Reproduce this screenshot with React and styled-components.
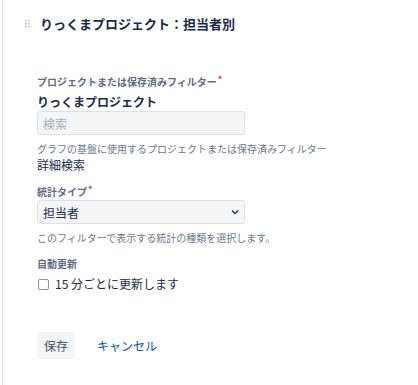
import React from 'react'
import styled, { createGlobalStyle } from 'styled-components'

const GlobalStyle = createGlobalStyle`
    html, body {
        margin: 0;
        padding: 0;
        background: #fff;
    }
    body {
        font-family: "Noto Sans CJK JP", "Noto Sans", sans-serif;
        color: #172b4d;
    }
`;

const Page = styled.div`
    padding-left: 2px;
    height: 385px;
    box-sizing: border-box;
`;

const Panel = styled.div`
    border-left: 1px solid #e2e2ea;
    height: 100%;
    box-sizing: border-box;
`;

const Header = styled.div`
    display: flex;
    align-items: center;
    padding: 14px 0 0 22px;
    gap: 10px;
`;

const Handle = styled.svg`
    display: block;
    flex-shrink: 0;
`;

const Title = styled.h2`
    margin: 0;
    font-size: 13px;
    line-height: 20px;
    font-weight: 700;
    color: #172b4d;
`;

const Form = styled.form`
    padding: 41px 0 0 34px;
    display: flex;
    flex-direction: column;
`;

const Field = styled.div`
    display: flex;
    flex-direction: column;
    margin-top: ${props => props.gap || 0}px;
`;

const Label = styled.label`
    font-size: 10px;
    line-height: 14px;
    font-weight: 700;
    color: #5e6c84;
    margin-bottom: ${props => props.mb || 1}px;
    span {
        color: #de350b;
        font-size: 9px;
        vertical-align: top;
        line-height: 10px;
        margin-left: 1px;
    }
`;

const Value = styled.div`
    font-size: 12px;
    line-height: 16px;
    font-weight: ${props => props.bold ? 700 : 400};
    color: #172b4d;
    margin-bottom: ${props => props.mb || 0}px;
    margin-top: ${props => props.mt || 0}px;
`;

const Search = styled.input`
    width: 208px;
    height: 24px;
    box-sizing: border-box;
    background: #f4f5f7;
    border: 1px solid #dfe1e6;
    border-radius: 3px;
    padding: 0 5px;
    font-family: inherit;
    font-size: 12px;
    color: #172b4d;
    outline: none;
    &::placeholder {
        color: #a5adba;
    }
`;

const Select = styled.select`
    appearance: none;
    width: 208px;
    height: 24px;
    box-sizing: border-box;
    background-color: #f4f5f7;
    background-image: url("data:image/svg+xml,%3Csvg xmlns='http://www.w3.org/2000/svg' width='8' height='6' viewBox='0 0 8 6'%3E%3Cpath d='M1 1.5l3 3 3-3' fill='none' stroke='%23253858' stroke-width='1.4'/%3E%3C/svg%3E");
    background-repeat: no-repeat;
    background-position: right 5px center;
    border: 1px solid #dfe1e6;
    border-radius: 3px;
    padding: 0 5px;
    font-family: inherit;
    font-size: 12px;
    color: #172b4d;
    outline: none;
`;

const Help = styled.div`
    font-size: 10px;
    line-height: 14px;
    color: #6b778c;
    margin-top: 7px;
`;

const CheckRow = styled.label`
    display: flex;
    align-items: center;
    gap: 6px;
    margin-top: 4px;
    font-size: 12px;
    line-height: 16px;
    color: #172b4d;
`;

const Check = styled.input`
    appearance: none;
    margin: 0 0 0 1px;
    width: 11px;
    height: 11px;
    border: 1px solid #8993a4;
    border-radius: 2px;
    background: #fff;
    box-sizing: border-box;
`;

const Actions = styled.div`
    display: flex;
    align-items: center;
    gap: 15px;
    margin-top: 40px;
`;

const Button = styled.button`
    height: 27px;
    padding: 0 7px;
    border: none;
    border-radius: 3px;
    background: ${props => props.link ? 'transparent' : '#f4f5f7'};
    color: ${props => props.link ? '#0052cc' : '#42526e'};
    font-family: inherit;
    font-size: 12px;
    cursor: pointer;
`;

function DragHandle() {
    const dots = []
    for (let r = 0; r < 3; r++) {
        for (let c = 0; c < 2; c++) {
            dots.push(<rect key={r + '-' + c} x={c * 3} y={r * 3} width="1.5" height="1.5" fill="#b3bac5" />)
        }
    }
    return (
        <Handle width="5" height="8" viewBox="0 0 5 8">
            {dots}
        </Handle>
    )
}

export default function App() {
    return (
        <Page>
            <GlobalStyle />
            <Panel>
                <Header>
                    <DragHandle />
                    <Title>りっくまプロジェクト：担当者別</Title>
                </Header>
                <Form onSubmit={e => e.preventDefault()}>
                    <Field>
                        <Label mb={5}>プロジェクトまたは保存済みフィルター<span>*</span></Label>
                        <Value bold mb={1}>りっくまプロジェクト</Value>
                        <Search placeholder="検索" />
                        <Help>グラフの基盤に使用するプロジェクトまたは保存済みフィルター</Help>
                        <Value mt={1}>詳細検索</Value>
                    </Field>
                    <Field gap={12}>
                        <Label>統計タイプ<span>*</span></Label>
                        <Select defaultValue="assignee">
                            <option value="assignee">担当者</option>
                        </Select>
                        <Help>このフィルターで表示する統計の種類を選択します。</Help>
                    </Field>
                    <Field gap={12}>
                        <Label mb={0}>自動更新</Label>
                        <CheckRow>
                            <Check type="checkbox" />
                            15 分ごとに更新します
                        </CheckRow>
                    </Field>
                    <Actions>
                        <Button type="submit">保存</Button>
                        <Button type="button" link>キャンセル</Button>
                    </Actions>
                </Form>
            </Panel>
        </Page>
    )
}
